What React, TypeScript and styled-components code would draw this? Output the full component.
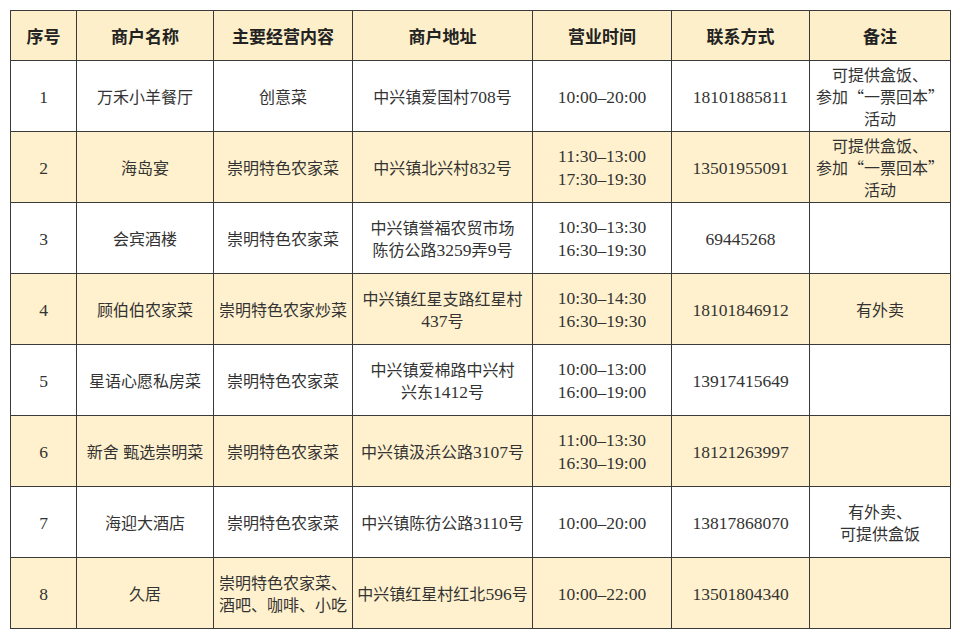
import styled, { createGlobalStyle } from "styled-components";

const GlobalStyle = createGlobalStyle`
  body {
    margin: 0;
    background: #ffffff;
  }
`;

type Row = {
  no: string;
  name: string;
  business: string[];
  address: string[];
  hours: string[];
  phone: string;
  note: string[];
};

const rows: Row[] = [
  { no: "1", name: "万禾小羊餐厅", business: ["创意菜"], address: ["中兴镇爱国村708号"], hours: ["10:00–20:00"], phone: "18101885811", note: ["可提供盒饭、", "参加“一票回本”", "活动"] },
  { no: "2", name: "海岛宴", business: ["崇明特色农家菜"], address: ["中兴镇北兴村832号"], hours: ["11:30–13:00", "17:30–19:30"], phone: "13501955091", note: ["可提供盒饭、", "参加“一票回本”", "活动"] },
  { no: "3", name: "会宾酒楼", business: ["崇明特色农家菜"], address: ["中兴镇誉福农贸市场", "陈彷公路3259弄9号"], hours: ["10:30–13:30", "16:30–19:30"], phone: "69445268", note: [] },
  { no: "4", name: "顾伯伯农家菜", business: ["崇明特色农家炒菜"], address: ["中兴镇红星支路红星村", "437号"], hours: ["10:30–14:30", "16:30–19:30"], phone: "18101846912", note: ["有外卖"] },
  { no: "5", name: "星语心愿私房菜", business: ["崇明特色农家菜"], address: ["中兴镇爱棉路中兴村", "兴东1412号"], hours: ["10:00–13:00", "16:00–19:00"], phone: "13917415649", note: [] },
  { no: "6", name: "新舍 甄选崇明菜", business: ["崇明特色农家菜"], address: ["中兴镇汲浜公路3107号"], hours: ["11:00–13:30", "16:30–19:00"], phone: "18121263997", note: [] },
  { no: "7", name: "海迎大酒店", business: ["崇明特色农家菜"], address: ["中兴镇陈彷公路3110号"], hours: ["10:00–20:00"], phone: "13817868070", note: ["有外卖、", "可提供盒饭"] },
  { no: "8", name: "久居", business: ["崇明特色农家菜、", "酒吧、咖啡、小吃"], address: ["中兴镇红星村红北596号"], hours: ["10:00–22:00"], phone: "13501804340", note: [] },
];

const headers = ["序号", "商户名称", "主要经营内容", "商户地址", "营业时间", "联系方式", "备注"];
const widths = [66, 137, 139, 180, 139, 138, 141];

const Page = styled.div`
  padding: 10px;
`;

const Table = styled.table`
  width: 940px;
  table-layout: fixed;
  border-collapse: collapse;
  font-family: "Noto Sans CJK SC", sans-serif;
  font-size: 16px;
  color: #333333;
`;

const HeadCell = styled.th`
  height: 49px;
  padding: 0;
  background: #fdefc9;
  border: 1.5px solid #3a3a3a;
  font-weight: 700;
  font-size: 17px;
  color: #222222;
  text-align: center;
  vertical-align: middle;
`;

const BodyRow = styled.tr<{ $shaded: boolean }>`
  height: 71px;
  background: ${(p) => (p.$shaded ? "#fff1cd" : "#ffffff")};
`;

const Cell = styled.td`
  padding: 0;
  border: 1.5px solid #3a3a3a;
  text-align: center;
  vertical-align: middle;
  line-height: 22px;
  white-space: nowrap;
`;

const Line = styled.div`
  display: block;
`;

// latin runs (digits, times) come out wider in the source, so they get their own size
const Latin = styled.span`
  font-family: "Liberation Serif", serif;
  font-size: 17.5px;
`;

const Txt = ({ text }: { text: string }) => (
  <>
    {text.split(/([\x20-\x7E–]+)/).map((part, i) =>
      /^[\x20-\x7E–]+$/.test(part) ? <Latin key={i}>{part}</Latin> : part
    )}
  </>
);

const Lines = ({ items }: { items: string[] }) => (
  <>
    {items.map((t, i) => (
      <Line key={i}>
        <Txt text={t} />
      </Line>
    ))}
  </>
);

export default function App() {
  return (
    <Page>
      <GlobalStyle />
      <Table>
        <colgroup>
          {widths.map((w, i) => (
            <col key={i} style={{ width: w }} />
          ))}
        </colgroup>
        <thead>
          <tr>
            {headers.map((h) => (
              <HeadCell key={h}>{h}</HeadCell>
            ))}
          </tr>
        </thead>
        <tbody>
          {rows.map((r, i) => (
            <BodyRow key={r.no} $shaded={i % 2 === 1}>
              <Cell><Txt text={r.no} /></Cell>
              <Cell><Txt text={r.name} /></Cell>
              <Cell><Lines items={r.business} /></Cell>
              <Cell><Lines items={r.address} /></Cell>
              <Cell><Lines items={r.hours} /></Cell>
              <Cell><Txt text={r.phone} /></Cell>
              <Cell><Lines items={r.note} /></Cell>
            </BodyRow>
          ))}
        </tbody>
      </Table>
    </Page>
  );
}
